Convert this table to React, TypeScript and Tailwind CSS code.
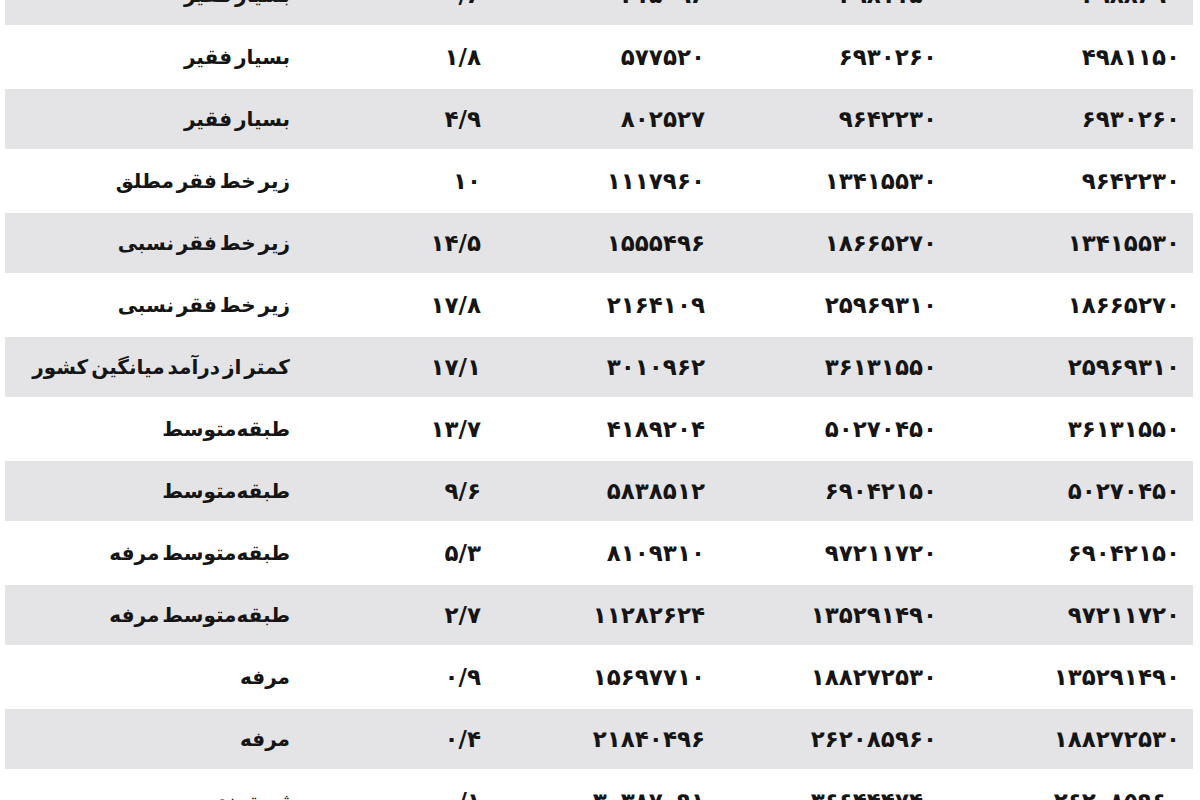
const rows: string[][] = [
  ['بسیار فقیر', '۰/۶', '۴۱۵۰۹۶', '۴۹۸۱۱۵۰', '۲۹۸۸۶۹۰'],
  ['بسیار فقیر', '۱/۸', '۵۷۷۵۲۰', '۶۹۳۰۲۶۰', '۴۹۸۱۱۵۰'],
  ['بسیار فقیر', '۴/۹', '۸۰۲۵۲۷', '۹۶۴۲۲۳۰', '۶۹۳۰۲۶۰'],
  ['زیر خط فقر مطلق', '۱۰', '۱۱۱۷۹۶۰', '۱۳۴۱۵۵۳۰', '۹۶۴۲۲۳۰'],
  ['زیر خط فقر نسبی', '۱۴/۵', '۱۵۵۵۴۹۶', '۱۸۶۶۵۲۷۰', '۱۳۴۱۵۵۳۰'],
  ['زیر خط فقر نسبی', '۱۷/۸', '۲۱۶۴۱۰۹', '۲۵۹۶۹۳۱۰', '۱۸۶۶۵۲۷۰'],
  ['کمتر از درآمد میانگین کشور', '۱۷/۱', '۳۰۱۰۹۶۲', '۳۶۱۳۱۵۵۰', '۲۵۹۶۹۳۱۰'],
  ['طبقه‌متوسط', '۱۳/۷', '۴۱۸۹۲۰۴', '۵۰۲۷۰۴۵۰', '۳۶۱۳۱۵۵۰'],
  ['طبقه‌متوسط', '۹/۶', '۵۸۳۸۵۱۲', '۶۹۰۴۲۱۵۰', '۵۰۲۷۰۴۵۰'],
  ['طبقه‌متوسط مرفه', '۵/۳', '۸۱۰۹۳۱۰', '۹۷۲۱۱۷۲۰', '۶۹۰۴۲۱۵۰'],
  ['طبقه‌متوسط مرفه', '۲/۷', '۱۱۲۸۲۶۲۴', '۱۳۵۲۹۱۴۹۰', '۹۷۲۱۱۷۲۰'],
  ['مرفه', '۰/۹', '۱۵۶۹۷۷۱۰', '۱۸۸۲۷۲۵۳۰', '۱۳۵۲۹۱۴۹۰'],
  ['مرفه', '۰/۴', '۲۱۸۴۰۴۹۶', '۲۶۲۰۸۵۹۶۰', '۱۸۸۲۷۲۵۳۰'],
  ['ثروتمند', '۰/۱', '۳۰۳۸۷۰۹۱', '۳۶۶۴۴۴۷۴۰', '۲۶۲۰۸۵۹۶۰'],
];

function Row({ cells, shaded }: { cells: string[]; shaded: boolean }) {
  const [label, pct, avg, upper, lower] = cells;
  return (
    <div
      className={
        shaded
          ? 'ml-[5px] mr-[7px] h-[60px] flex items-center bg-[#e4e4e7] pr-[13px]'
          : 'ml-[5px] mr-[7px] h-[64px] flex items-center pr-[13px]'
      }
    >
      <div className="w-[243px] text-right text-[23px]">{lower}</div>
      <div className="w-[232px] text-right text-[23px]">{upper}</div>
      <div className="w-[224px] text-right text-[23px]">{avg}</div>
      <div className="w-[191px] text-right text-[23px]">{pct}</div>
      <div className="flex-1 text-right whitespace-nowrap text-[20px] [word-spacing:-4px]">{label}</div>
    </div>
  );
}

export default function App() {
  return (
    <div className="w-[1200px] h-[800px] overflow-hidden bg-white">
      <div
        dir="rtl"
        className="-mt-[35px] flex flex-col font-bold text-[#151515] leading-none"
        style={{ fontFamily: '"DejaVu Sans", sans-serif' }}
      >
        {rows.map((r, i) => (
          <Row key={i} cells={r} shaded={i % 2 === 0} />
        ))}
      </div>
    </div>
  );
}
